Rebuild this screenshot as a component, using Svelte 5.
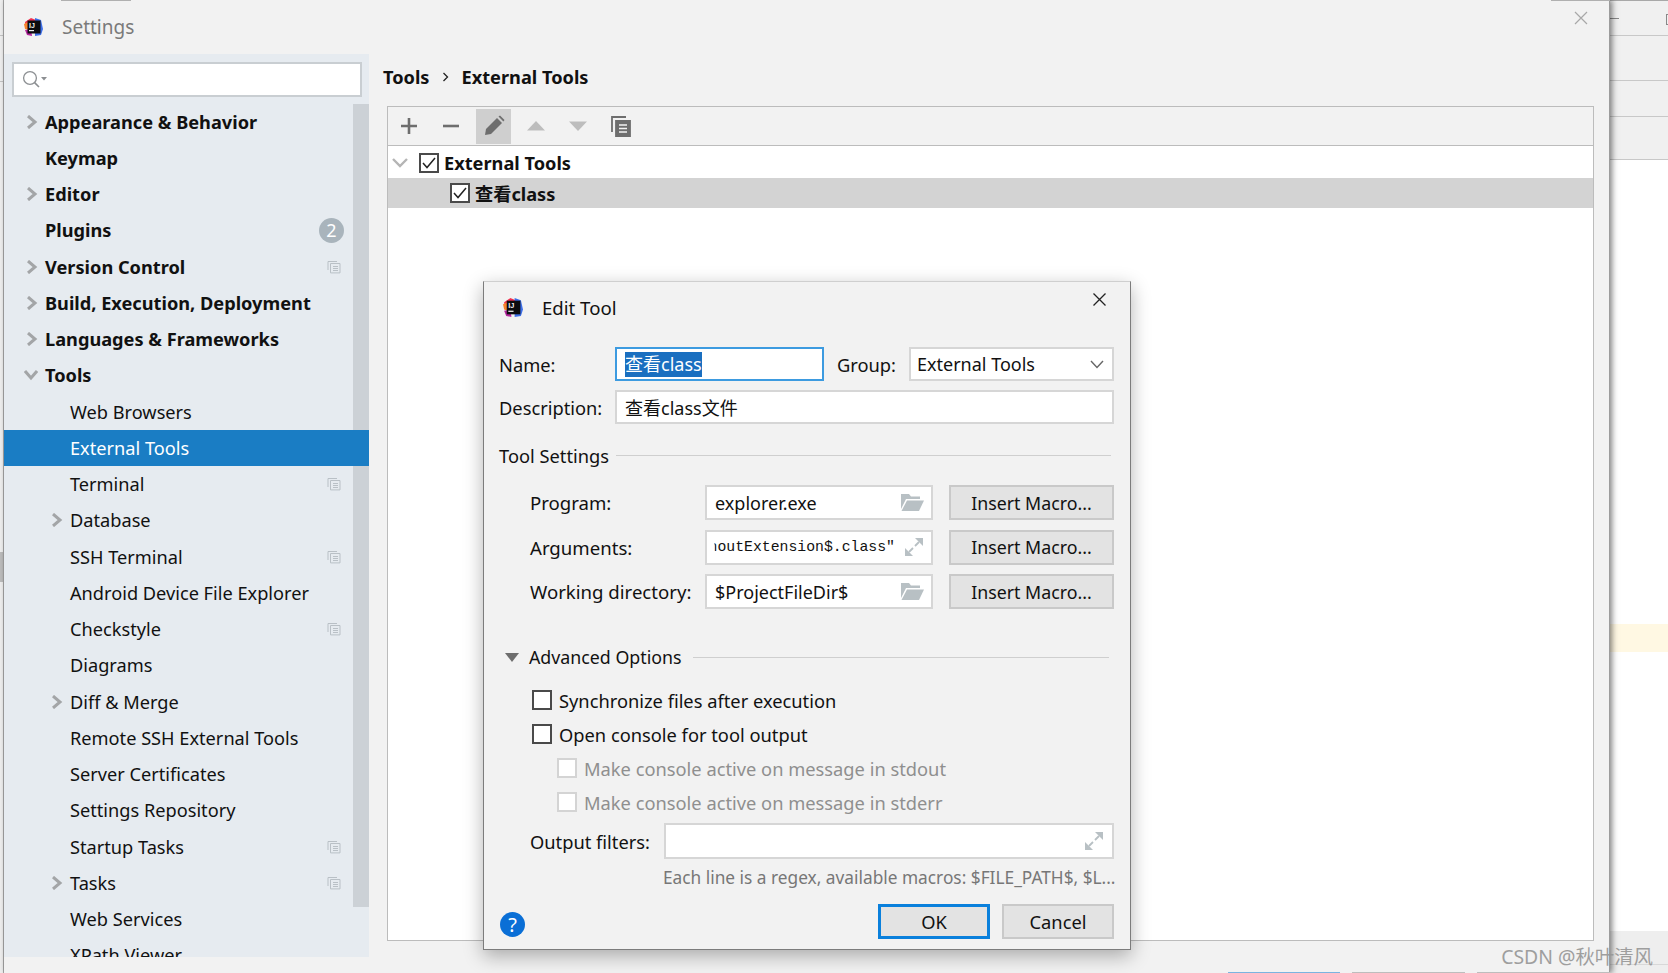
<script lang="ts">
  type Row = { label: string; depth: number; bold?: boolean; arrow?: 'right' | 'down'; copy?: boolean; badge?: string; selected?: boolean };

  const rows: Row[] = [
    { label: 'Appearance & Behavior', depth: 0, bold: true, arrow: 'right' },
    { label: 'Keymap', depth: 0, bold: true },
    { label: 'Editor', depth: 0, bold: true, arrow: 'right' },
    { label: 'Plugins', depth: 0, bold: true, badge: '2' },
    { label: 'Version Control', depth: 0, bold: true, arrow: 'right', copy: true },
    { label: 'Build, Execution, Deployment', depth: 0, bold: true, arrow: 'right' },
    { label: 'Languages & Frameworks', depth: 0, bold: true, arrow: 'right' },
    { label: 'Tools', depth: 0, bold: true, arrow: 'down' },
    { label: 'Web Browsers', depth: 1 },
    { label: 'External Tools', depth: 1, selected: true },
    { label: 'Terminal', depth: 1, copy: true },
    { label: 'Database', depth: 1, arrow: 'right' },
    { label: 'SSH Terminal', depth: 1, copy: true },
    { label: 'Android Device File Explorer', depth: 1 },
    { label: 'Checkstyle', depth: 1, copy: true },
    { label: 'Diagrams', depth: 1 },
    { label: 'Diff & Merge', depth: 1, arrow: 'right' },
    { label: 'Remote SSH External Tools', depth: 1 },
    { label: 'Server Certificates', depth: 1 },
    { label: 'Settings Repository', depth: 1 },
    { label: 'Startup Tasks', depth: 1, copy: true },
    { label: 'Tasks', depth: 1, arrow: 'right', copy: true },
    { label: 'Web Services', depth: 1 },
    { label: 'XPath Viewer', depth: 1 }
  ];

  const macroRows = [
    { label: 'Program:', value: 'explorer.exe', icon: 'folder' },
    { label: 'Arguments:', value: 'houtExtension$.class"', icon: 'expand', mono: true },
    { label: 'Working directory:', value: '$ProjectFileDir$', icon: 'folder' }
  ];
</script>

{#snippet logo(size: number)}
  <svg class="logo" width={size} height={size} viewBox="0 0 20 20">
    <path d="M2 5 L8 1 L13 3 L10 12 L3 12 Z" fill="#f0304f" />
    <path d="M1 7 L5 5 L6 13 L2 12 Z" fill="#f7842c" />
    <path d="M12 1 L18 3 L20 12 L18 18 L12 19 Z" fill="#3d6fe8" />
    <path d="M2 13 L8 12 L9 19 L4 18 Z" fill="#b5279e" />
    <rect x="4.5" y="3.5" width="13" height="13" fill="#0b0b0f" />
    <text x="6" y="10.5" class="logo-text">IJ</text>
    <rect x="6" y="13" width="5" height="1.2" fill="#e8e8e8" />
  </svg>
{/snippet}

{#snippet copyIcon()}
  <svg class="copy" width="14" height="14" viewBox="0 0 14 14" fill="none" stroke="#b9c0c6" stroke-width="1">
    <path d="M1 10 V1.5 H10" />
    <path d="M3.5 12 V3.5 H13 V12.9 H3.5 Z" />
    <path d="M6 6.5 H11 M6 8.5 H11 M6 10.5 H11" />
  </svg>
{/snippet}

{#snippet folder()}
  <svg class="fieldicon" width="24" height="19" viewBox="0 0 24 19">
    <path d="M1 1 H9 L11 3.5 H20 V6 H6 L1 16 Z" fill="#b8c0c4" />
    <path d="M7 7.5 H24 L19 18 H1.5 Z" fill="#b8c0c4" />
  </svg>
{/snippet}

{#snippet expand()}
  <svg class="fieldicon" width="20" height="20" viewBox="0 0 20 20" fill="#b8c0c4">
    <path d="M11 1 H19 V9 Z" />
    <path d="M1 11 V19 H9 Z" />
    <path d="M11 9 L15 5 M9 11 L5 15" stroke="#b8c0c4" stroke-width="1.8" />
  </svg>
{/snippet}

<div class="screen">
  <div class="edge">
    <span class="edge-line l1"></span>
    <span class="edge-line l2"></span>
    <span class="edge-block"></span>
  </div>

  <div class="window">
    <span class="top-tab t1"></span>
    <span class="top-tab t2"></span>
    <header class="titlebar">
      <div class="title-left">
        {@render logo(20)}
        <span class="title">Settings</span>
      </div>
      <svg class="winclose" width="14" height="14" viewBox="0 0 14 14" stroke="#a8a8a8" stroke-width="1.2">
        <path d="M1 1 L13 13 M13 1 L1 13" />
      </svg>
    </header>

    <div class="body">
      <aside class="sidebar">
        <div class="search">
          <svg width="26" height="20" viewBox="0 0 26 20" fill="none" stroke="#8c8f92" stroke-width="1.3">
            <circle cx="8" cy="8" r="6.4" />
            <path d="M12.6 12.6 L17 17" stroke-width="1.6" />
            <path d="M19 7 H25 L22 10.5 Z" fill="#8c8f92" stroke="none" />
          </svg>
        </div>
        <div class="tree">
          <div class="tree-scroll">
            {#each rows as row}
              <div class="row" class:selected={row.selected} class:bold={row.bold} class:sub={row.depth === 1}>
                <span class="arrowslot">
                  {#if row.arrow === 'right'}
                    <svg width="12" height="14" viewBox="0 0 12 14" fill="none" stroke="#a3a5a7" stroke-width="3">
                      <path d="M2 1 L9 7 L2 13" />
                    </svg>
                  {:else if row.arrow === 'down'}
                    <svg width="14" height="12" viewBox="0 0 14 12" fill="none" stroke="#a3a5a7" stroke-width="3">
                      <path d="M1 2 L7 9 L13 2" />
                    </svg>
                  {/if}
                </span>
                <span class="label">{row.label}</span>
                {#if row.badge}
                  <span class="badge">{row.badge}</span>
                {:else if row.copy}
                  <span class="copyslot">{@render copyIcon()}</span>
                {/if}
              </div>
            {/each}
          </div>
          <div class="scrollbar"></div>
        </div>
      </aside>

      <main class="content">
        <div class="crumbs">
          <span>Tools</span>
          <svg width="8" height="12" viewBox="0 0 8 12" fill="none" stroke="#222" stroke-width="1.3">
            <path d="M1.5 2 L5.5 6 L1.5 10" />
          </svg>
          <span>External Tools</span>
        </div>
        <section class="panel">
          <div class="toolbar">
            <button class="tool" aria-label="Add">
              <svg width="18" height="18" viewBox="0 0 18 18" stroke="#6e6e6e" stroke-width="2.6"><path d="M9 1 V17 M1 9 H17" /></svg>
            </button>
            <button class="tool" aria-label="Remove">
              <svg width="18" height="18" viewBox="0 0 18 18" stroke="#6e6e6e" stroke-width="2.6"><path d="M1 9 H17" /></svg>
            </button>
            <button class="tool active" aria-label="Edit">
              <svg width="22" height="22" viewBox="0 0 22 22" fill="#6e6e6e">
                <path d="M2 20 L3 14 L14 3 L19 8 L8 19 Z" />
                <path d="M15.5 1.5 L17 0.5 L21.5 5 L20.4 6.6 Z" />
              </svg>
            </button>
            <button class="tool" aria-label="Move up">
              <svg width="18" height="10" viewBox="0 0 18 10" fill="#bdbdbd"><path d="M0 9.5 L9 0 L18 9.5 Z" /></svg>
            </button>
            <button class="tool" aria-label="Move down">
              <svg width="18" height="10" viewBox="0 0 18 10" fill="#bdbdbd"><path d="M0 0.5 H18 L9 10 Z" /></svg>
            </button>
            <button class="tool last" aria-label="Copy">
              <svg width="20" height="21" viewBox="0 0 20 21" fill="none" stroke="#6e6e6e" stroke-width="1.8">
                <path d="M1 16 V1 H15" />
                <path d="M5 5 H19 V20 H5 Z" fill="#6e6e6e" />
                <path d="M8 9 H16 M8 12.5 H16 M8 16 H16" stroke="#f2f2f2" stroke-width="1.4" />
              </svg>
            </button>
          </div>
          <div class="list">
            <div class="list-row group">
              <svg width="16" height="10" viewBox="0 0 16 10" fill="none" stroke="#b5b5b5" stroke-width="2.4"><path d="M1 1 L8 8 L15 1" /></svg>
              <span class="box checked"><svg width="14" height="12" viewBox="0 0 14 12" fill="none" stroke="#222" stroke-width="1.5"><path d="M1 6 L5 10.5 L13 1" /></svg></span>
              <span>External Tools</span>
            </div>
            <div class="list-row child">
              <span class="box checked"><svg width="14" height="12" viewBox="0 0 14 12" fill="none" stroke="#222" stroke-width="1.5"><path d="M1 6 L5 10.5 L13 1" /></svg></span>
              <span>查看class</span>
            </div>
          </div>
        </section>
      </main>
    </div>
  </div>

  <div class="behind">
    <div class="b-row b1"><span class="dash"></span><span class="sq"></span></div>
    <div class="b-row b2"></div>
    <div class="b-row b3"></div>
    <div class="b-row b4"></div>
    <div class="b-white">
      <div class="b-yellow"></div>
    </div>
    <div class="b-foot"><div class="b-foot-top"></div></div>
  </div>

  <div class="dialog">
    <header class="d-title">
      {@render logo(21)}
      <span>Edit Tool</span>
      <svg class="d-close" width="13" height="13" viewBox="0 0 13 13" stroke="#222" stroke-width="1.3">
        <path d="M0.5 0.5 L12.5 12.5 M12.5 0.5 L0.5 12.5" />
      </svg>
    </header>

    <div class="line name-line">
      <label class="lbl">Name:</label>
      <div class="field focus name"><span class="sel">查看class</span></div>
      <label class="lbl group-lbl">Group:</label>
      <div class="field combo">
        <span>External Tools</span>
        <svg width="14" height="9" viewBox="0 0 14 9" fill="none" stroke="#666" stroke-width="1.4"><path d="M1 1 L7 7.5 L13 1" /></svg>
      </div>
    </div>
    <div class="line desc-line">
      <label class="lbl">Description:</label>
      <div class="field grow">查看class文件</div>
    </div>

    <div class="sep-title settings">
      <span>Tool Settings</span>
      <i></i>
    </div>

    <div class="macros">
      {#each macroRows as m}
        <div class="macro">
          <label class="lbl">{m.label}</label>
          <div class="field wide">
            <span class:mono={m.mono}>{m.value}</span>
            {#if m.icon === 'folder'}{@render folder()}{:else}{@render expand()}{/if}
          </div>
          <button class="btn macro-btn">Insert Macro...</button>
        </div>
      {/each}
    </div>

    <div class="sep-title advanced">
      <svg width="14" height="9" viewBox="0 0 14 9" fill="#6e6e6e"><path d="M0 0 H14 L7 9 Z" /></svg>
      <span>Advanced Options</span>
      <i></i>
    </div>

    <div class="checks">
      <div class="check"><span class="box"></span>Synchronize files after execution</div>
      <div class="check"><span class="box"></span>Open console for tool output</div>
      <div class="check off"><span class="box"></span>Make console active on message in stdout</div>
      <div class="check off"><span class="box"></span>Make console active on message in stderr</div>
    </div>

    <div class="line filters">
      <label class="lbl">Output filters:</label>
      <div class="field grow tall">{@render expand()}</div>
    </div>
    <div class="hint">Each line is a regex, available macros: $FILE_PATH$, $L...</div>

    <footer class="d-foot">
      <span class="help">?</span>
      <button class="btn ok">OK</button>
      <button class="btn cancel">Cancel</button>
    </footer>
  </div>

  <span class="task-tab k1"></span>
  <span class="task-tab k2"></span>
  <span class="task-tab k3"></span>

  <div class="watermark">CSDN @秋叶清风</div>
</div>

<style>
  :global(body) {
    margin: 0;
    background: #f2f2f2;
  }
  .screen {
    position: relative;
    display: flex;
    width: 1668px;
    height: 973px;
    overflow: hidden;
    font-family: "Noto Sans", "Noto Sans CJK SC", sans-serif;
    font-size: 18.2px;
    color: #111;
  }
  .edge {
    position: relative;
    flex: 0 0 4px;
    background: #f0f0f0;
    border-right: 1px solid #a8a8a8;
    box-sizing: border-box;
  }
  .edge-line {
    position: absolute;
    left: 0;
    width: 3px;
    height: 1px;
    background: #c4c4c4;
  }
  .l1 {
    top: 35px;
  }
  .l2 {
    top: 81px;
  }
  .edge-block {
    position: absolute;
    left: 0;
    top: 552px;
    width: 3px;
    height: 30px;
    background: #bdbdbd;
  }
  .window {
    position: relative;
    flex: 0 0 1606px;
    display: flex;
    flex-direction: column;
    background: #f2f2f2;
    box-shadow: 2px 0 6px rgba(0, 0, 0, 0.5);
    border-right: 1px solid #9c9c9c;
    box-sizing: border-box;
    z-index: 1;
  }
  .top-tab {
    position: absolute;
    top: 0;
    height: 1px;
    background: #b0b0b0;
  }
  .t1 {
    left: 57px;
    width: 70px;
  }
  .t2 {
    left: 1547px;
    width: 59px;
  }
  .titlebar {
    flex: 0 0 54px;
    display: flex;
    align-items: center;
    justify-content: space-between;
    padding: 0 21px 0 19px;
    box-sizing: border-box;
  }
  .title-left {
    display: flex;
    align-items: center;
    gap: 19px;
  }
  .title {
    color: #7a7a7a;
    font-size: 19px;
  }
  .winclose {
    margin-top: -18px;
  }
  .logo {
    display: block;
    flex: none;
  }
  .logo-text {
    font-family: "Liberation Sans", sans-serif;
    font-size: 7px;
    font-weight: 700;
    fill: #f0f0f0;
  }
  .body {
    flex: 1;
    display: flex;
    min-height: 0;
  }
  .sidebar {
    flex: 0 0 365px;
    height: 903px;
    background: #e6ebf0;
    display: flex;
    flex-direction: column;
  }
  .search {
    margin: 8px 7px 6.5px 8px;
    height: 35px;
    box-sizing: border-box;
    background: #fff;
    border: 2px solid #c9ced2;
    display: flex;
    align-items: center;
    padding-left: 8px;
  }
  .tree {
    flex: 1;
    display: flex;
    min-height: 0;
    overflow: hidden;
    position: relative;
  }
  .tree-scroll {
    flex: 1;
    min-width: 0;
  }
  .scrollbar {
    position: absolute;
    top: 0;
    right: 0;
    width: 16px;
    height: 803px;
    background: #ccd1d6;
  }
  .row {
    position: relative;
    z-index: 1;
    height: 36.25px;
    display: flex;
    align-items: center;
    padding-right: 28px;
    width: 365px;
    box-sizing: border-box;
  }
  .row.bold {
    font-weight: 700;
  }
  .row.selected {
    background: #1a7dc4;
    color: #fff;
  }
  .arrowslot {
    flex: none;
    width: 41px;
    display: flex;
    justify-content: flex-end;
    padding-right: 7px;
    box-sizing: border-box;
  }
  .row.sub .arrowslot {
    width: 66px;
  }
  .label {
    flex: 1;
    white-space: nowrap;
  }
  .badge {
    flex: none;
    width: 25px;
    height: 25px;
    margin-right: -3px;
    border-radius: 50%;
    background: #a9b4bc;
    color: #fff;
    font-size: 18px;
    font-weight: 400;
    display: flex;
    align-items: center;
    justify-content: center;
  }
  .copyslot {
    flex: none;
    display: flex;
  }
  .content {
    flex: 1;
    min-width: 0;
    padding: 0 15px 0 18px;
    display: flex;
    flex-direction: column;
  }
  .crumbs {
    display: flex;
    align-items: center;
    gap: 12px;
    height: 44px;
    margin: 1px 0 0 -4px;
    font-weight: 700;
  }
  .panel {
    flex: 0 0 835px;
    border: 1px solid #bcbcbc;
    margin-top: 7px;
    background: #fff;
    box-sizing: border-box;
  }
  .toolbar {
    height: 38px;
    background: #f2f2f2;
    border-bottom: 1px solid #bcbcbc;
    display: flex;
    align-items: center;
  }
  .tool {
    width: 42px;
    height: 35px;
    padding: 0;
    border: none;
    background: none;
    display: flex;
    align-items: center;
    justify-content: center;
  }
  .tool.active {
    width: 35px;
    margin: 0 4px;
    background: #cfcfcf;
  }
  .tool.last {
    margin-left: 1px;
  }
  .list-row {
    display: flex;
    align-items: center;
    font-weight: 700;
  }
  .list-row.group {
    height: 32px;
    box-sizing: border-box;
    padding: 2px 0 0 4px;
    gap: 8px;
  }
  .list-row.group .box {
    margin-left: 3px;
    margin-right: -3px;
  }
  .list-row.child {
    height: 30px;
    background: #d3d3d3;
    padding-left: 62px;
    gap: 5px;
  }
  .box {
    flex: none;
    width: 20px;
    height: 20px;
    box-sizing: border-box;
    background: #fff;
    border: 2px solid #4a4a4a;
    display: inline-flex;
    align-items: center;
    justify-content: center;
  }
  .behind {
    flex: 1;
    display: flex;
    flex-direction: column;
    background: #f0f0f0;
  }
  .b-row {
    box-sizing: border-box;
    border-bottom: 1px solid #c8c8c8;
  }
  .b1 {
    height: 36px;
    border-top: 1px solid #a8a8a8;
    position: relative;
  }
  .dash {
    position: absolute;
    left: 0;
    top: 17px;
    width: 9px;
    height: 1px;
    background: #888;
  }
  .sq {
    position: absolute;
    left: 56px;
    top: 13px;
    width: 8px;
    height: 9px;
    border: 1px solid #888;
  }
  .b2 {
    height: 45px;
  }
  .b3 {
    height: 36px;
  }
  .b4 {
    height: 43px;
  }
  .b-white {
    flex: 1;
    background: #fff;
  }
  .b-yellow {
    height: 28px;
    margin-top: 464px;
    background: #fff8e3;
  }
  .b-foot {
    height: 42px;
    background: #eeeeee;
  }
  .b-foot-top {
    height: 34px;
    box-sizing: border-box;
    border-bottom: 1px solid #d8d8d8;
  }
  .dialog {
    position: absolute;
    left: 483px;
    top: 281px;
    width: 648px;
    height: 669px;
    box-sizing: border-box;
    z-index: 3;
    background: #f2f2f2;
    border: 1px solid #7c7c7c;
    border-top-color: #cfcfcf;
    box-shadow: 0 6px 18px rgba(0, 0, 0, 0.3);
    padding: 0 16px 0 15px;
    font-size: 18.3px;
    display: flex;
    flex-direction: column;
  }
  .d-title {
    height: 65px;
    box-sizing: border-box;
    padding-bottom: 14px;
    display: flex;
    align-items: center;
    gap: 19px;
    margin-left: 3px;
    position: relative;
    flex: none;
  }
  .d-title span {
    font-size: 18.6px;
  }
  .d-close {
    position: absolute;
    right: 8px;
    top: 11px;
  }
  .line {
    display: flex;
    align-items: center;
    flex: none;
  }
  .lbl {
    display: block;
    white-space: nowrap;
  }
  .name-line .lbl:first-child,
  .desc-line .lbl {
    width: 116px;
    flex: none;
  }
  .group-lbl {
    margin: 0 13px 0 13px;
  }
  .field {
    height: 34px;
    box-sizing: border-box;
    background: #fff;
    border: 2px solid #d6d6d6;
    display: flex;
    align-items: center;
    padding-left: 8px;
    white-space: nowrap;
    overflow: hidden;
    font-size: 18px;
  }
  .field.grow {
    flex: 1;
  }
  .name {
    width: 209px;
    flex: none;
  }
  .focus {
    border-color: #3d9be0;
  }
  .sel {
    background: #1a6fc0;
    color: #fff;
    line-height: 25px;
  }
  .combo {
    flex: 1;
    justify-content: space-between;
    padding: 0 8px 0 6px;
  }
  .desc-line {
    margin-top: 9px;
  }
  .sep-title {
    display: flex;
    align-items: center;
    flex: none;
  }
  .sep-title i {
    flex: 1;
    height: 1px;
    background: #cfcfcf;
  }
  .settings {
    margin-top: 19px;
    height: 24px;
    gap: 7px;
    padding-right: 3px;
  }
  .macros {
    flex: none;
    margin-top: 18px;
    padding-left: 31px;
    display: flex;
    flex-direction: column;
    gap: 9.5px;
  }
  .macro {
    display: flex;
    align-items: center;
    height: 35px;
  }
  .macro .lbl {
    flex: 0 0 175px;
    font-size: 18.6px;
  }
  .wide {
    flex: 0 0 228px;
    height: 35px;
    justify-content: space-between;
    padding-right: 7px;
  }
  .mono {
    font-family: "Liberation Mono", monospace;
    font-size: 14.8px;
    margin-left: -6.5px;
    clip-path: inset(0 0 0 6px);
  }
  .fieldicon {
    flex: none;
  }
  .btn {
    font: inherit;
    color: inherit;
    background: #e3e3e3;
    border: 2px solid #c9c9c9;
    padding: 0;
    box-sizing: border-box;
  }
  .macro-btn {
    margin-left: 16px;
    flex: 0 0 165px;
    height: 35px;
    font-size: 17.8px;
  }
  .advanced {
    margin-top: 36px;
    height: 24px;
    padding-left: 6px;
    padding-right: 5px;
    font-size: 17.8px;
  }
  .advanced span {
    margin-left: 10px;
    margin-right: 11px;
  }
  .checks {
    flex: none;
    margin-top: 21px;
    padding-left: 33px;
    display: flex;
    flex-direction: column;
    gap: 14px;
  }
  .check {
    display: flex;
    align-items: center;
    gap: 7px;
    height: 20px;
    white-space: nowrap;
  }
  .check .box {
    border-width: 2px;
  }
  .check.off {
    color: #8f8f8f;
    margin-left: 25px;
  }
  .check.off .box {
    border-color: #d4d4d4;
  }
  .filters {
    margin-top: 11px;
    padding-left: 31px;
  }
  .filters .lbl {
    flex: 0 0 134px;
  }
  .tall {
    height: 36px;
    justify-content: flex-end;
    padding-right: 8px;
  }
  .hint {
    flex: none;
    margin-top: 7px;
    margin-left: 164px;
    margin-right: -4px;
    height: 24px;
    line-height: 24px;
    font-size: 17.3px;
    color: #777;
    white-space: nowrap;
  }
  .d-foot {
    flex: none;
    margin-top: 14px;
    height: 35px;
    display: flex;
    align-items: center;
  }
  .help {
    width: 25px;
    height: 25px;
    margin: 5px auto 0 1px;
    border-radius: 50%;
    background: #0a6fd6;
    color: #fff;
    display: flex;
    align-items: center;
    justify-content: center;
    font-size: 20px;
  }
  .ok,
  .cancel {
    width: 112px;
    height: 35px;
  }
  .ok {
    border: 3px solid #0a80dc;
    margin-right: 12px;
  }
  .task-tab {
    position: absolute;
    top: 972px;
    height: 1px;
    z-index: 2;
    background: #bdbdbd;
  }
  .k1 {
    left: 1228px;
    width: 112px;
    background: #7ab4e0;
  }
  .k2 {
    left: 1352px;
    width: 113px;
  }
  .k3 {
    left: 1477px;
    width: 133px;
  }
  .watermark {
    position: absolute;
    right: 15px;
    top: 941px;
    z-index: 4;
    color: #969696;
    font-size: 19.4px;
    opacity: 0.9;
  }
</style>
